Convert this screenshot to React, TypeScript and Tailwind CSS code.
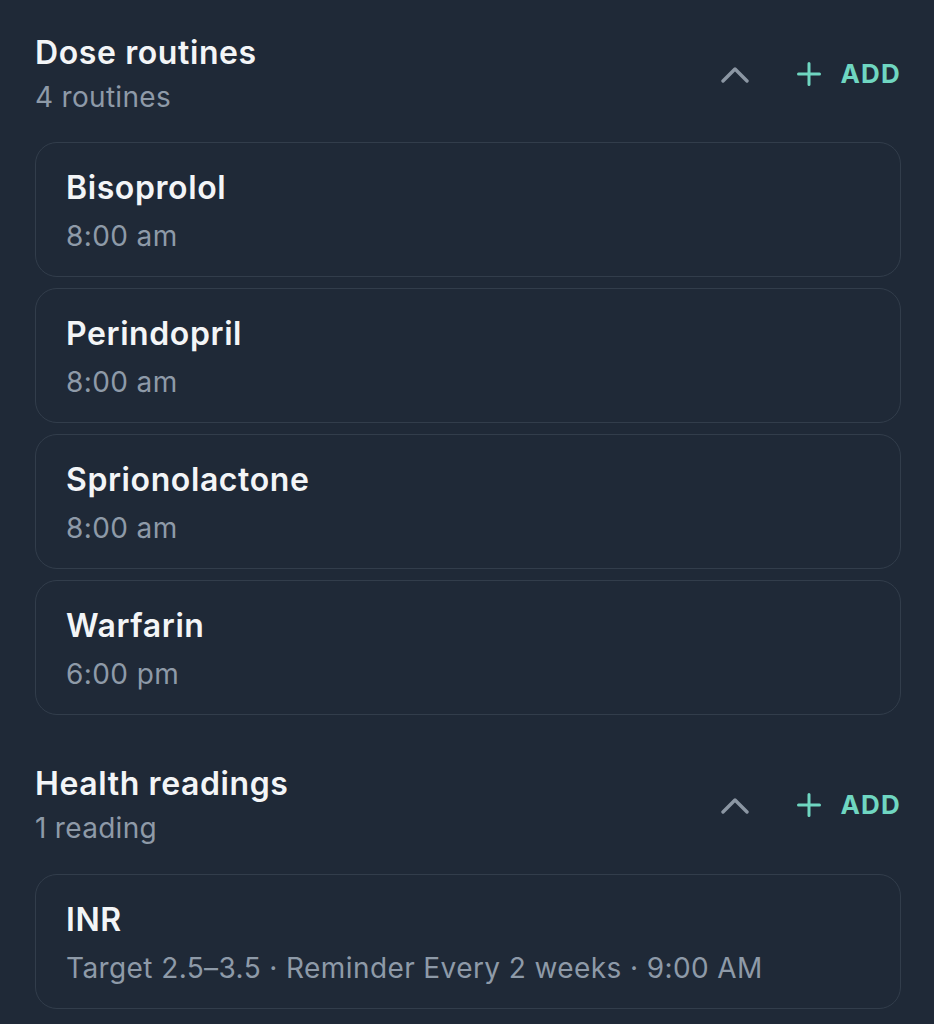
type Item = { title: string; detail: string };

const routines: Item[] = [
  { title: 'Bisoprolol', detail: '8:00 am' },
  { title: 'Perindopril', detail: '8:00 am' },
  { title: 'Sprionolactone', detail: '8:00 am' },
  { title: 'Warfarin', detail: '6:00 pm' },
];

const readings: Item[] = [
  { title: 'INR', detail: 'Target 2.5–3.5 · Reminder Every 2 weeks · 9:00 AM' },
];

function SectionHeader({ title, subtitle }: { title: string; subtitle: string }) {
  return (
    <div className="flex items-center justify-between">
      <div className="flex flex-col">
        <h2 className="text-[32px] leading-[38px] font-semibold tracking-[0.6px] text-[#f3f5f7]">{title}</h2>
        <p className="mt-[8px] text-[28px] leading-[34px] tracking-[0.3px] text-[#8e9aa8]">{subtitle}</p>
      </div>
      <div className="flex items-center">
        <button className="text-[#8b96a3]">
          <svg width="28" height="17" viewBox="0 0 28 17" fill="none">
            <path d="M2 15 L14 3 L26 15" stroke="currentColor" strokeWidth="3.4" strokeLinecap="round" strokeLinejoin="round" />
          </svg>
        </button>
        <button className="ml-[48px] flex items-center gap-[19px] text-[#6fd6c1]">
          <svg width="24" height="24" viewBox="0 0 24 24" fill="none">
            <path d="M1.5 12 H22.5 M12 1.5 V22.5" stroke="currentColor" strokeWidth="3" strokeLinecap="round" />
          </svg>
          <span className="text-[26px] leading-[32px] font-bold tracking-[1.2px]">ADD</span>
        </button>
      </div>
    </div>
  );
}

function Card({ item }: { item: Item }) {
  return (
    <div className="rounded-[22px] border border-[#323d4b] px-[30px] pt-[26px] pb-[23px]">
      <div className="text-[32px] leading-[38px] font-semibold tracking-[0.6px] text-[#f3f5f7]">{item.title}</div>
      <div className="mt-[12px] text-[28px] leading-[34px] tracking-[0.4px] text-[#8e9aa8]">{item.detail}</div>
    </div>
  );
}

export default function App() {
  return (
    <div
      className="min-h-screen bg-[#1f2937] pl-[35px] pr-[33px] pt-[34px]"
      style={{ fontFamily: 'Inter, "Noto Sans", sans-serif' }}
    >
      <SectionHeader title="Dose routines" subtitle="4 routines" />
      <div className="mt-[28px] flex flex-col gap-[11px]">
        {routines.map((r) => (
          <Card key={r.title} item={r} />
        ))}
      </div>

      <div className="mt-[50px]">
        <SectionHeader title="Health readings" subtitle="1 reading" />
      </div>
      <div className="mt-[29px] flex flex-col gap-[11px]">
        {readings.map((r) => (
          <Card key={r.title} item={r} />
        ))}
      </div>
    </div>
  );
}
